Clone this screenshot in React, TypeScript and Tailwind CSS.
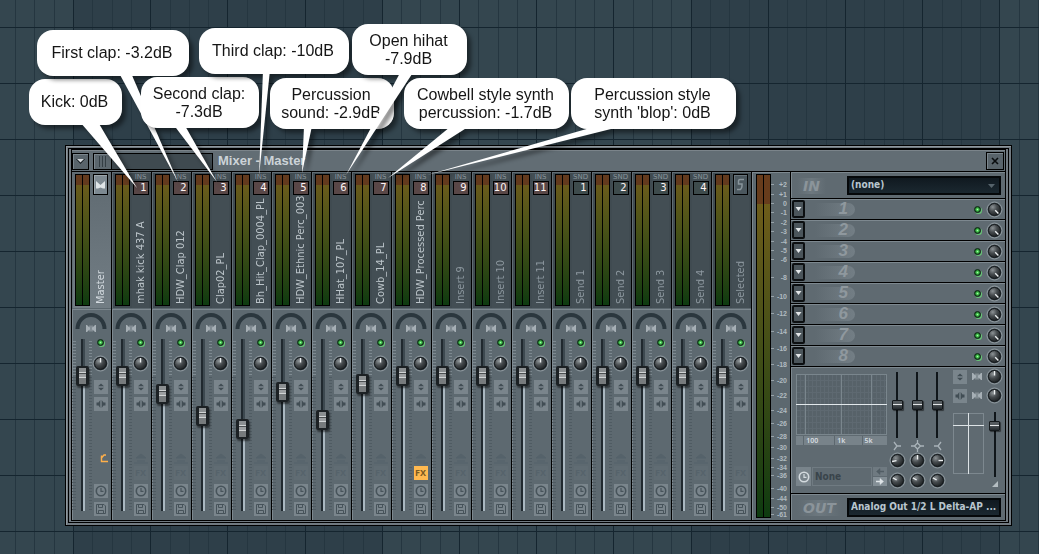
import React, { useState } from "react";
import clsx from "clsx";

type StripT = { id: string; name: string; kind: "master" | "ins" | "snd" | "sel"; num?: string; level: number; dim?: boolean; fx?: boolean };

const STRIPS: StripT[] = [
  { id: "m", name: "Master", kind: "master", level: 125 },
  { id: "i1", name: "mhak kick 437 A", kind: "ins", num: "1", level: 125 },
  { id: "i2", name: "HDW_Clap 012", kind: "ins", num: "2", level: 107 },
  { id: "i3", name: "Clap02_PL", kind: "ins", num: "3", level: 85 },
  { id: "i4", name: "Bh_Hit_Clap_0004_PL", kind: "ins", num: "4", level: 72 },
  { id: "i5", name: "HDW_Ethnic Perc_003", kind: "ins", num: "5", level: 109 },
  { id: "i6", name: "HHat_107_PL", kind: "ins", num: "6", level: 81 },
  { id: "i7", name: "Cowb_14_PL", kind: "ins", num: "7", level: 117 },
  { id: "i8", name: "HDW_Processed Perc", kind: "ins", num: "8", level: 125, fx: true },
  { id: "i9", name: "Insert 9", kind: "ins", num: "9", level: 125, dim: true },
  { id: "i10", name: "Insert 10", kind: "ins", num: "10", level: 125, dim: true },
  { id: "i11", name: "Insert 11", kind: "ins", num: "11", level: 125, dim: true },
  { id: "s1", name: "Send 1", kind: "snd", num: "1", level: 125, dim: true },
  { id: "s2", name: "Send 2", kind: "snd", num: "2", level: 125, dim: true },
  { id: "s3", name: "Send 3", kind: "snd", num: "3", level: 125, dim: true },
  { id: "s4", name: "Send 4", kind: "snd", num: "4", level: 125, dim: true },
  { id: "sel", name: "Selected", kind: "sel", level: 125, dim: true },
];

// label and its distance in px from the top of the scale
const SCALE: [string, number][] = [
  ["+2", 12], ["+1", 22], ["0", 31], ["-1", 40], ["-2", 50], ["-3", 59], ["-4", 69], ["-5", 78], ["-6", 87],
  ["-8", 105], ["-10", 124], ["-12", 141], ["-14", 159], ["-16", 176], ["-18", 192], ["-20", 208], ["-22", 223],
  ["-24", 238], ["-26", 251], ["-28", 264], ["-30", 275], ["-32", 286], ["-34", 295], ["-36", 303], ["-40", 316],
  ["-44", 326], ["-50", 335], ["-61", 342],
];

const CALLOUTS = [
  { lines: ["Kick: 0dB"], box: "left-[29px] top-[79px] w-[93px] h-[46px]", tail: "80,122 98,122 137,188" },
  { lines: ["First clap: -3.2dB"], box: "left-[37px] top-[30px] w-[152px] h-[46px]", tail: "119,73 131,73 178,182" },
  { lines: ["Second clap:", "-7.3dB"], box: "left-[141px] top-[77px] w-[118px] h-[51px]", tail: "173,124 184,124 217,182" },
  { lines: ["Third clap: -10dB"], box: "left-[199px] top-[28px] w-[150px] h-[46px]", tail: "263,70 270,70 259,176" },
  { lines: ["Percussion", "sound: -2.9dB"], box: "left-[270px] top-[78px] w-[124px] h-[51px]", tail: "304,126 312,126 302,173" },
  { lines: ["Open hihat", "-7.9dB"], box: "left-[352px] top-[24px] w-[115px] h-[51px]", tail: "401,71 414,71 346,175" },
  { lines: ["Cowbell style synth", "percussion: -1.7dB"], box: "left-[404px] top-[78px] w-[165px] h-[51px]", tail: "450,127 468,127 388,178" },
  { lines: ["Percussion style", "synth 'blop': 0dB"], box: "left-[571px] top-[78px] w-[165px] h-[51px]", tail: "590,128 619,127 427,175" },
];

export default function App() {
  return (
    <main className="relative min-h-screen overflow-hidden bg-[#31434d] pt-[145px] pb-7 pl-[65px] pr-[27px] font-['Noto_Sans',sans-serif]">
      <GridBackdrop />
      <MixerWindow />
      {CALLOUTS.map((c) => (
        <Callout key={c.tail} {...c} />
      ))}
    </main>
  );
}

function GridBackdrop() {
  const bars = Array.from({ length: 40 }, (_, i) => i);
  return (
    <svg className="absolute inset-0 h-full w-full" shapeRendering="crispEdges" aria-hidden="true">
      {bars.slice(0, 8).map((i) => (
        <rect key={i} x={73 + i * 309} y="0" width="309" height="100%" fill={i % 2 ? "#34464f" : "#2e3f49"} />
      ))}
      <rect width="73" height="100%" fill="#34464f" />
      {Array.from({ length: 160 }, (_, i) => (
        <rect key={i} x={Math.round(73 + (i - 3) * 19.3)} width="1" y="0" height="100%" fill={(i - 3) % 4 === 0 ? "#15252f" : "#253640"} />
      ))}
      {bars.map((i) => (
        <rect key={i} x="0" y={27 + i * 56} width="100%" height="1" fill="#15252f" />
      ))}
    </svg>
  );
}

function Callout({ lines, box, tail }: { lines: string[]; box: string; tail: string }) {
  return (
    <div className="pointer-events-none absolute inset-0 drop-shadow-[4px_4px_2px_rgba(0,0,0,0.45)]">
      <svg className="absolute inset-0 h-full w-full" aria-hidden="true"><polygon points={tail} fill="#fff" /></svg>
      <p className={clsx("absolute flex flex-col items-center justify-center whitespace-nowrap rounded-2xl bg-white pr-0.5 text-center font-['Liberation_Sans',sans-serif] text-base leading-[18px] text-[#151515]", box)}>
        {lines.map((l) => <span key={l}>{l}</span>)}
      </p>
    </div>
  );
}

function MixerWindow() {
  return (
    <section aria-label="Mixer" className="relative border border-black bg-[#717a81] p-0.5 shadow-[inset_1px_1px_0_#8f979c]">
      <div className="border border-black bg-[#717a81] px-0.5 pb-px">
        <div className="border border-black bg-black">
          <TitleBar />
          <div className="flex bg-[#5c686f]">
            {STRIPS.map((s) => <Strip key={s.id} strip={s} />)}
            <MasterMeter />
            <EffectsPanel />
          </div>
        </div>
      </div>
    </section>
  );
}

function TitleBar() {
  return (
    <header className="mb-px flex h-[21px] items-center border-t border-[#7b848a] bg-[#626d74] pr-px">
      <button aria-label="Menu" className="grid h-[17px] w-[17px] place-items-center border border-black bg-[#59646b] shadow-[inset_1px_1px_0_#7b868d]">
        <svg width="9" height="5" viewBox="0 0 9 5"><path d="M0 0h9L4.500 5z" fill="#11181c" /><path d="M1 0h7L4.500 3.500z" fill="#d5dade" /></svg>
      </button>
      <div className="ml-1 flex h-[17px] w-[120px] border border-black bg-[#3f4a50]">
        <button aria-label="Scroll" className="flex w-[18px] items-center justify-center gap-0.5 border-r border-black bg-[#5c676e] shadow-[inset_1px_1px_0_#7b868d]">
          {[0, 1, 2].map((i) => <span key={i} className="h-[11px] w-px bg-[#343e44]" />)}
        </button>
      </div>
      <h1 className="ml-[5px] flex-1 font-['Liberation_Sans',sans-serif] text-[13px] font-bold leading-4 text-[#ccd3d8]">Mixer - Master</h1>
      <button aria-label="Close" className="grid h-[18px] w-[18px] place-items-center border border-black bg-[#59646b] shadow-[inset_1px_1px_0_#7b868d]">
        <svg width="8" height="8" viewBox="0 0 8 8"><path d="M1 1l6 6M7 1L1 7" stroke="#0a0d0f" strokeWidth="1.600" /></svg>
      </button>
    </header>
  );
}

function Strip({ strip }: { strip: StripT }) {
  return (
    <div className="flex w-10 shrink-0 flex-col border-r border-black">
      <div
        className={clsx(
          "flex h-[136px] justify-between pl-[3px] pr-0.5 pt-0.5 shadow-[inset_1px_1px_0_#626d74]",
          strip.kind === "master" ? "bg-linear-to-b from-[#5f6a71] to-[#727d84]" : "bg-[#404b51]"
        )}
      >
        <div className="flex h-[132px] w-[15px] gap-px bg-black p-px">
          <LevelBar />
          <LevelBar />
        </div>
        <div className={clsx("flex w-[17px] flex-col items-center", strip.kind !== "master" && "bg-[#434e54]")}>
          <StripBadge strip={strip} />
          <span
            className={clsx(
              "min-h-0 flex-1 rotate-180 whitespace-nowrap pt-1 font-['DejaVu_Sans_Condensed','Noto_Sans',sans-serif] text-[11px] leading-4 [writing-mode:vertical-rl]",
              strip.kind === "master" ? "text-[#d3dadf]" : strip.dim ? "text-[#8c979e]" : "text-[#bcc5ca]"
            )}
          >
            {strip.name}
          </span>
        </div>
      </div>
      <StripControls strip={strip} />
    </div>
  );
}

function LevelBar() {
  return <div className="flex-1 bg-linear-to-b from-[#705c1c] via-[#4b5318] via-40% to-[#0d3b10]"><div className="h-2.5 bg-[#633a1d]" /></div>;
}

function StripBadge({ strip }: { strip: StripT }) {
  if (strip.kind === "master" || strip.kind === "sel") {
    const master = strip.kind === "master";
    return (
      <button
        aria-label={strip.name}
        className={clsx("grid h-[21px] w-[15px] shrink-0 place-items-center border border-black", master ? "bg-[#7d8991] shadow-[inset_1px_1px_0_#9ba5ab]" : "bg-[#4b575e] shadow-[inset_1px_1px_0_#66727a]")}
      >
        {master ? (
          <svg width="11" height="10" viewBox="0 0 11 10"><path d="M1 8.500V1l4.500 4L10 1v7.500H8L5.500 7.500 3 8.500z" fill="#dfe5e8" /></svg>
        ) : (
          <svg width="9" height="13" viewBox="0 0 9 13"><path d="M8 1.500H4Q2.500 1.500 2.500 3.500V6H6Q6 6 6 8T4.500 11.500H1" fill="none" stroke="#89959c" strokeWidth="1.500" /></svg>
        )}
      </button>
    );
  }
  return (
    <div className="flex shrink-0 flex-col items-center">
      <span className="h-[7px] font-['DejaVu_Sans',sans-serif] text-[7px] leading-[6px] text-[#8a959c]">{strip.kind === "ins" ? "INS" : "SND"}</span>
      <span
        className={clsx(
          "flex h-[14px] w-[16px] justify-end border border-black pr-px font-['DejaVu_Sans',sans-serif] text-[10px] leading-3 text-[#fff4f4]",
          strip.kind === "ins" ? "bg-[#594747]" : "bg-[#3e4b4c]"
        )}
      >
        {strip.num}
      </span>
    </div>
  );
}

function StripControls({ strip }: { strip: StripT }) {
  const [level, setLevel] = useState(strip.level);
  return (
    <div className="mt-px h-[211px] bg-[#5d6970] shadow-[inset_1px_1px_0_#7d888f]">
      <div className="flex h-[30px] justify-center pr-px pt-[3px]">
        <svg width="32" height="23" viewBox="0 0 32 23" aria-hidden="true">
          <path d="M2.500 17A13.500 14 0 0 1 29.500 17" fill="none" stroke="#2b373e" strokeWidth="4" />
          <Bowtie x={11} y={13} />
        </svg>
      </div>
      <div className="flex">
        <div className="flex w-5">
          <Ticks />
          <Fader label={`${strip.name} volume`} value={level} onChange={setLevel} />
          <Ticks />
        </div>
        <div className="flex flex-1 flex-col items-center pr-0.5">
          <Led label={`${strip.name} on`} />
          <div className="mt-[9px]"><Knob label={`${strip.name} pan`} angle={0} /></div>
          <div className="mt-2 flex flex-col gap-[3px]">
            <ToolButton label="Swap phase"><UpDown /></ToolButton>
            <ToolButton label="Swap channels"><LeftRight /></ToolButton>
          </div>
          <div className="mt-[41px] h-3.5">
            {strip.kind === "master" ? (
              <svg width="14" height="12" viewBox="0 0 14 12"><path d="M14 9.500H7.500V3.500M7 6.500L10 3H12" stroke="#ffb04a" strokeWidth="1.400" fill="none" /></svg>
            ) : (
              strip.kind !== "sel" && <svg width="14" height="12" viewBox="0 0 14 12"><path d="M0 11h14M3 9h8M2 6l5-4 5 4z" stroke="#55626a" fill="#55626a" /></svg>
            )}
          </div>
          <div className="h-[14px]">
            {strip.fx ? (
              <button className="block h-[14px] w-[14px] bg-[#ffb950] text-center text-[9px] font-bold leading-[14px] text-[#7b5a22]">FX</button>
            ) : (
              strip.kind !== "master" && (
                <button className="block h-[14px] w-[14px] bg-[#606c73] text-center text-[9px] font-bold leading-[14px] text-[#56636b]">FX</button>
              )
            )}
          </div>
          <div className="mt-1 flex flex-col gap-1">
            <ToolButton label="Latency"><Clock color="#47535a" /></ToolButton>
            <ToolButton label="Arm recording"><Floppy /></ToolButton>
          </div>
        </div>
      </div>
    </div>
  );
}

function Ticks() {
  return (
    <div className="flex w-1 flex-col pt-0.5">
      <div className="h-9 bg-[repeating-linear-gradient(to_bottom,#7e8a91_0px,#7e8a91_1px,transparent_1px,transparent_3px)]" />
      <div className="h-[134px] bg-[repeating-linear-gradient(to_bottom,#4f5b62_0px,#4f5b62_1px,transparent_1px,transparent_3px)]" />
    </div>
  );
}

function Fader({ label, value, onChange }: { label: string; value: number; onChange: (v: number) => void }) {
  const top = 162 - value;
  return (
    <input
      type="range"
      aria-label={label}
      min={0}
      max={152}
      value={value}
      onChange={(e) => onChange(Number(e.target.value))}
      style={{ backgroundImage: `linear-gradient(#20292f, #20292f), linear-gradient(to bottom, #3d4950 ${top}px, #a9b7c0 ${top}px)` }}
      className="z-10 block h-[172px] w-[13px] shrink-0 appearance-none bg-[length:2px_100%,4px_100%] bg-[position:5px_0,5px_0] bg-no-repeat [direction:rtl] [writing-mode:vertical-lr] [&::-webkit-slider-thumb]:h-5 [&::-webkit-slider-thumb]:w-[13px] [&::-webkit-slider-thumb]:appearance-none [&::-webkit-slider-thumb]:rounded-[2px] [&::-webkit-slider-thumb]:border-2 [&::-webkit-slider-thumb]:border-y-[3px] [&::-webkit-slider-thumb]:border-[#1c2124] [&::-webkit-slider-thumb]:bg-linear-[to_bottom,#8b8f91_0px,#8b8f91_4px,#d2d5d6_4px,#d2d5d6_5px,#4b4f51_5px,#4b4f51_6px,#9da0a2_6px,#9da0a2_9px,#d2d5d6_9px,#d2d5d6_10px,#777b7d_10px] [&::-webkit-slider-thumb]:shadow-[1px_2px_2px_rgba(0,0,0,0.5)]"
    />
  );
}

function SmallFader({ label, className, max, start }: { label: string; className: string; max: number; start: number }) {
  return (
    <input
      type="range"
      aria-label={label}
      min={0}
      max={max}
      defaultValue={start}
      className={clsx(
        "block w-[11px] appearance-none bg-linear-to-b from-[#10161a] to-[#10161a] bg-[length:2px_100%] bg-center bg-no-repeat [direction:rtl] [writing-mode:vertical-lr] [&::-webkit-slider-thumb]:h-2.5 [&::-webkit-slider-thumb]:w-[11px] [&::-webkit-slider-thumb]:appearance-none [&::-webkit-slider-thumb]:rounded-[1px] [&::-webkit-slider-thumb]:border [&::-webkit-slider-thumb]:border-[#14191c] [&::-webkit-slider-thumb]:bg-linear-[to_bottom,#555b5f_0px,#555b5f_3px,#e3e6e7_3px,#e3e6e7_4px,#4a5054_4px,#23292d_8px] [&::-webkit-slider-thumb]:shadow-[1px_1px_1px_rgba(0,0,0,0.5)]",
        className
      )}
    />
  );
}

function Led({ label }: { label: string }) {
  return (
    <input
      type="checkbox"
      defaultChecked
      aria-label={label}
      className="block h-[7px] w-[7px] appearance-none rounded-full border border-[#0b2b12] bg-[radial-gradient(circle,#a6ffa8_0px,#4fd058_1px,#0c4415_3px)] shadow-[1px_1px_0_#68c877]"
    />
  );
}

function Knob({ label, angle }: { label: string; angle: number }) {
  return (
    <button aria-label={label} className="block h-[17px] w-[17px]">
      <svg width="17" height="17" viewBox="0 0 17 17">
        <defs>
          <radialGradient id="knob" cx="0.35" cy="0.3" r="0.8">
            <stop offset="0" stopColor="#8c9295" />
            <stop offset="0.45" stopColor="#454a4d" />
            <stop offset="1" stopColor="#15191b" />
          </radialGradient>
        </defs>
        <circle cx="8.500" cy="8.500" r="7.500" fill="#4b565c" stroke="#929ca2" />
        <circle cx="8.500" cy="8.500" r="6" fill="url(#knob)" stroke="#13171a" />
        <path d="M8.500 3v4.500" stroke="#eef1f2" strokeWidth="1.400" transform={`rotate(${angle} 8.500 8.500)`} />
      </svg>
    </button>
  );
}

function ToolButton({ label, children }: { label: string; children: React.ReactNode }) {
  return <button aria-label={label} className="grid h-[14px] w-[14px] place-items-center bg-[#7a858c]">{children}</button>;
}

function UpDown() {
  return <svg width="8" height="8" viewBox="0 0 8 8"><path d="M1 3.200L4 .5l3 2.700zM1 4.800L4 7.500l3-2.700z" fill="#414d54" /></svg>;
}

function LeftRight() {
  return <svg width="10" height="8" viewBox="0 0 10 8"><path d="M4.300 0v8L2.500 5.500H.5v-3h2zM5.700 0v8l1.800-2.500h2v-3h-2z" fill="#414d54" /></svg>;
}

function Clock({ color }: { color: string }) {
  return (
    <svg width="12" height="12" viewBox="0 0 12 12"><circle cx="6" cy="6" r="4.700" fill="none" stroke={color} strokeWidth="1.600" /><path d="M6 3v3.300h2.500" fill="none" stroke={color} strokeWidth="1.200" /></svg>
  );
}

function Floppy() {
  return (
    <svg width="12" height="12" viewBox="0 0 12 12"><path d="M1.500 1.500h7.500l1.500 1.500v7.500h-9zM3.500 1.500v3h4v-3M3.500 10.500v-3h5v3" fill="none" stroke="#47535a" /></svg>
  );
}

function Bowtie({ x, y }: { x: number; y: number }) {
  return <path transform={`translate(${x} ${y})`} d="M0 0h1l2.500 2.500V0.500H4.500v6H3.500V4.500L1 7H0zM10 0H9L6.500 2.500V0.500H5.500v6h1V4.500L9 7h1z" fill="#a6afb5" />;
}

function MasterMeter() {
  return (
    <div className="flex w-[39px] shrink-0 border-r border-black pl-1 pt-0.5 shadow-[inset_1px_1px_0_#7d888f]">
      <div className="flex h-[344px] w-[15px] gap-px bg-black p-px">
        {[0, 1].map((i) => (
          <div key={i} className="flex-1 bg-linear-to-b from-[#765f1b] via-[#444f17] via-50% to-[#0d3b10]"><div className="h-[29px] bg-[#673c1c]" /></div>
        ))}
      </div>
      <div className="flex flex-1 flex-col pr-[3px] pt-[7px]">
        {SCALE.map(([label, at], i) => (
          <div key={label} style={{ height: (SCALE[i + 1]?.[1] ?? at + 7) - at }} className="flex shrink-0 justify-between">
            <span className="mt-[3px] h-px w-[3px] bg-[#97a2a9]" />
            <span className="font-['Liberation_Sans',sans-serif] text-[7px] font-bold leading-[8px] text-[#b0bac0]">{label}</span>
          </div>
        ))}
      </div>
    </div>
  );
}

function EffectsPanel() {
  return (
    <div className="flex min-w-0 flex-1 flex-col bg-[#5f6a71]">
      <div className="flex h-[27px] items-center border-b border-black pl-1.5 pr-1 shadow-[inset_1px_1px_0_#7d888f]">
        <PortLabel htmlFor="input">IN</PortLabel>
        <PortSelect id="input" arrow>(none)</PortSelect>
      </div>
      {[1, 2, 3, 4, 5, 6, 7, 8].map((n) => (
        <div key={n} className="flex h-[21px] items-center border-b border-black pl-px pr-0.5 shadow-[inset_0_1px_0_#7d888f]">
          <button aria-label={`Effect ${n} menu`} className="grid h-[18px] w-[13px] place-items-center rounded-[2px] border-2 border-[#0c0f11] bg-[#4b555b]">
            <svg width="7" height="4" viewBox="0 0 7 4"><path d="M.5 0h6L3.500 4z" fill="#e3e7e9" /></svg>
          </button>
          <span className="ml-[10px] flex h-[13px] w-10 items-center justify-end rounded-r-full bg-linear-to-r from-transparent to-[#737e85] pr-[7px] font-['Liberation_Sans',sans-serif] text-[17px] font-bold italic leading-4 text-[#8f989e]">{n}</span>
          <span className="flex-1" />
          <Led label={`Effect ${n} on`} />
          <div className="ml-[5px]"><Knob label={`Effect ${n} mix`} angle={135} /></div>
        </div>
      ))}
      <EqPanel />
      <div className="flex h-[26px] items-center pl-1.5 pr-1 shadow-[inset_1px_1px_0_#7d888f]">
        <PortLabel htmlFor="output">OUT</PortLabel>
        <PortSelect id="output">Analog Out 1/2 L Delta-AP ...</PortSelect>
      </div>
    </div>
  );
}

function PortLabel({ htmlFor, children }: { htmlFor: string; children: React.ReactNode }) {
  return (
    <label htmlFor={htmlFor} className="w-[50px] shrink-0">
      <span className="inline-block bg-linear-to-r from-transparent via-[#6d787f] to-transparent px-1.5 font-['DejaVu_Sans',sans-serif] text-sm font-bold italic leading-4 text-[#8b949a]">{children}</span>
    </label>
  );
}

function PortSelect({ id, arrow, children }: { id: string; arrow?: boolean; children: string }) {
  return (
    <div className="relative min-w-0 flex-1">
      <select id={id} className="block h-[19px] w-full appearance-none border-2 border-[#05080a] bg-linear-to-b from-[#101920] to-[#1b2830] pl-0.5 font-['DejaVu_Sans_Condensed','Open_Sans',sans-serif] text-[10px] font-bold leading-[14px] text-[#b9c6cf]">
        <option>{children}</option>
      </select>
      {arrow && <svg className="pointer-events-none absolute right-1.5 top-2" width="7" height="4" viewBox="0 0 7 4"><path d="M0 0h7L3.500 4z" fill="#56636b" /></svg>}
    </div>
  );
}

function EqPanel() {
  return (
    <div className="flex h-[127px] border-b border-black pl-[5px] shadow-[inset_1px_1px_0_#7d888f]">
      <div className="min-w-[91px] flex-1 pt-[7px]">
        <svg className="block h-[61px] w-full" viewBox="0 0 91 61" preserveAspectRatio="none" aria-label="Equalizer curve">
          <rect x="0.500" y="0.500" width="90" height="60" fill="#576269" stroke="#7a868d" />
          {[4, 8, 12, 16, 20, 24, 28, 32, 36, 40, 44, 48, 52, 56, 60, 64, 68, 72, 76, 80, 84, 88].map((x) => <path key={x} d={`M${x}.5 1v59`} stroke="#5e6971" />)}
          {[6, 12, 18, 24, 36, 42, 48, 54].map((y) => <path key={y} d={`M1 ${y}.5h89`} stroke="#5e6971" />)}
          <path d="M9.500 1v59M45.500 1v59M75.500 1v59" stroke="#7a868d" />
          <path d="M0 30.500h91" stroke="#e2e8eb" />
        </svg>
        <div className="mt-px flex h-[9px] bg-[#78838a] text-[7px] font-semibold leading-[9px] text-[#d6dde1]">
          <span className="w-[9%] border-r border-[#5c676e]" />
          <span className="w-[33%] pl-0.5">100</span>
          <span className="w-[30%] border-l border-[#5c676e] pl-0.5">1k</span>
          <span className="w-[28%] border-l border-[#5c676e] pl-0.5">5k</span>
        </div>
        <div className="mt-[22px] flex h-[19px] gap-px">
          <button aria-label="Preset menu" className="grid w-[15px] shrink-0 place-items-center bg-[#79848b]"><Clock color="#d3dade" /></button>
          <span className="flex-1 border border-[#707b82] pl-0.5 font-['DejaVu_Sans_Condensed','Open_Sans',sans-serif] text-[10px] font-bold leading-[17px] text-[#39444b]">None</span>
          <span className="flex w-[14px] shrink-0 flex-col gap-px">
            <button aria-label="Previous preset" className="grid flex-1 place-items-center bg-[#6f7a81]"><Arrow color="#515d64" flip /></button>
            <button aria-label="Next preset" className="grid flex-1 place-items-center bg-[#848f96]"><Arrow color="#dfe5e8" /></button>
          </span>
        </div>
      </div>
      <div className="grid w-[60px] shrink-0 grid-cols-3 justify-items-center pt-[5px]">
        {["Low", "Mid", "High"].map((band, i) => (
          <div key={band} className="flex flex-col items-center">
            <SmallFader label={`${band} gain`} className="h-[66px]" max={55} start={28} />
            <svg className="mt-0.5" width="13" height="12" viewBox="0 0 13 12">
              <path
                d={["M3 2L6 6 3 10M6 6h4", "M0 6h3.500L6.500 3l3 3-3 3-3-3M9.500 6H13M6.500 0v3M6.500 9v3", "M10 2L7 6l3 4M7 6H3"][i]}
                fill="none"
                stroke="#a9b3b9"
                strokeWidth="1.300"
              />
            </svg>
            <Knob label={`${band} frequency`} angle={[-100, 0, 90][i]} />
            <div className="mt-[3px]"><Knob label={`${band} bandwidth`} angle={-60} /></div>
          </div>
        ))}
      </div>
      <div className="w-[58px] shrink-0 pl-1.5">
        <div className="flex h-[19px] items-center">
          <ToolButton label="Swap phase"><UpDown /></ToolButton>
          <svg className="ml-[5px] mr-1" width="10" height="7" viewBox="0 0 10 7"><Bowtie x={0} y={0} /></svg>
          <Knob label="Stereo separation" angle={0} />
        </div>
        <div className="flex h-[19px] items-center">
          <ToolButton label="Swap channels"><LeftRight /></ToolButton>
          <svg className="ml-[5px] mr-1" width="10" height="7" viewBox="0 0 10 7"><Bowtie x={0} y={0} /></svg>
          <Knob label="Panning" angle={0} />
        </div>
        <div className="mt-[7px] flex">
          <svg className="mt-px block" width="31" height="61" viewBox="0 0 31 61" aria-label="Stereo field">
            <rect x="0.500" y="0.500" width="30" height="60" fill="none" stroke="#7d888f" />
            <path d="M15.500 0v61M0 12.500h31" stroke="#dde3e6" />
          </svg>
          <div className="ml-[5px] flex flex-col items-center">
            <SmallFader label="Volume" className="h-[65px]" max={55} start={46} />
            <svg className="mt-1" width="6" height="6" viewBox="0 0 6 6"><path d="M6 0v6H0z" fill="#b4bdc2" /></svg>
          </div>
        </div>
      </div>
    </div>
  );
}

function Arrow({ color, flip }: { color: string; flip?: boolean }) {
  return <svg width="8" height="7" viewBox="0 0 8 7"><path d={flip ? "M8 3H4V.5L.5 3.500 4 6.500V4h4z" : "M0 3h4V.5l3.500 3L4 6.500V4H0z"} fill={color} stroke={color} strokeWidth=".5" /></svg>;
}
